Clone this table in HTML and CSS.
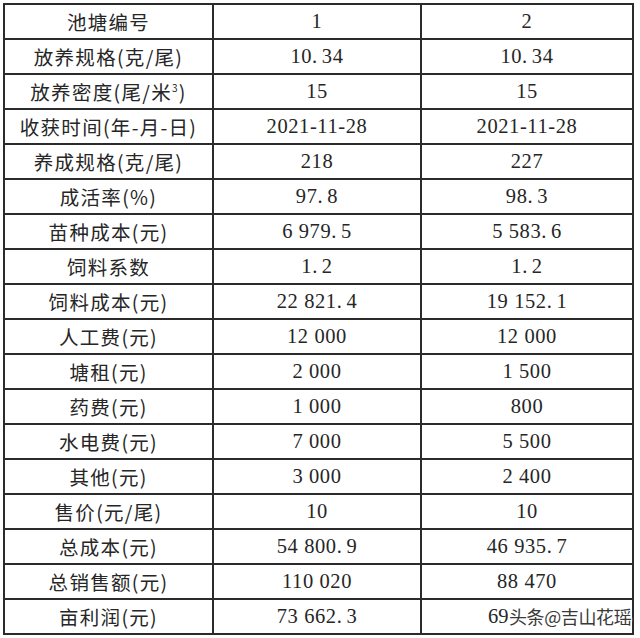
FILE: index.html
```html
<!DOCTYPE html>
<html lang="zh-CN">
<head>
<meta charset="utf-8">
<title>养殖成本表</title>
<link rel="stylesheet" href="styles.css">
</head>
<body>
<div class="page">
<table class="sheet">
  <colgroup><col class="c1"><col class="c2"><col class="c3"></colgroup>
  <tbody>
    <tr><td class="lbl">池塘编号</td><td class="num">1</td><td class="num">2</td></tr>
    <tr><td class="lbl">放养规格(克/尾)</td><td class="num">10.<span class="d">34</span></td><td class="num">10.<span class="d">34</span></td></tr>
    <tr><td class="lbl">放养密度(尾/米<sup>3</sup>)</td><td class="num">15</td><td class="num">15</td></tr>
    <tr><td class="lbl">收获时间(年-月-日)</td><td class="num">2021-11-28</td><td class="num">2021-11-28</td></tr>
    <tr><td class="lbl">养成规格(克/尾)</td><td class="num">218</td><td class="num">227</td></tr>
    <tr><td class="lbl">成活率(%)</td><td class="num">97.<span class="d">8</span></td><td class="num">98.<span class="d">3</span></td></tr>
    <tr><td class="lbl">苗种成本(元)</td><td class="num">6 979.<span class="d">5</span></td><td class="num">5 583.<span class="d">6</span></td></tr>
    <tr><td class="lbl">饲料系数</td><td class="num">1.<span class="d">2</span></td><td class="num">1.<span class="d">2</span></td></tr>
    <tr><td class="lbl">饲料成本(元)</td><td class="num">22 821.<span class="d">4</span></td><td class="num">19 152.<span class="d">1</span></td></tr>
    <tr><td class="lbl">人工费(元)</td><td class="num">12 000</td><td class="num">12 000</td></tr>
    <tr><td class="lbl">塘租(元)</td><td class="num">2 000</td><td class="num">1 500</td></tr>
    <tr><td class="lbl">药费(元)</td><td class="num">1 000</td><td class="num">800</td></tr>
    <tr><td class="lbl">水电费(元)</td><td class="num">7 000</td><td class="num">5 500</td></tr>
    <tr><td class="lbl">其他(元)</td><td class="num">3 000</td><td class="num">2 400</td></tr>
    <tr><td class="lbl">售价(元/尾)</td><td class="num">10</td><td class="num">10</td></tr>
    <tr><td class="lbl">总成本(元)</td><td class="num">54 800.<span class="d">9</span></td><td class="num">46 935.<span class="d">7</span></td></tr>
    <tr><td class="lbl">总销售额(元)</td><td class="num">110 020</td><td class="num">88 470</td></tr>
    <tr><td class="lbl">亩利润(元)</td><td class="num">73 662.<span class="d">3</span></td><td class="num last"><span class="v">69</span></td></tr>
  </tbody>
</table>
<div class="mark">头条@吉山花瑶</div>
</div>
</body>
</html>
```

FILE: styles.css
```css
html, body {
  margin: 0;
  padding: 0;
  background: #ffffff;
}

.page {
  position: relative;
  width: 640px;
  height: 638px;
  padding: 3px 0 0 3px;
  box-sizing: border-box;
}

.sheet {
  border-collapse: collapse;
  table-layout: fixed;
  width: 631px;
  border: 2px solid #2b2b2b;
}

.c1 { width: 209px; }
.c2 { width: 208px; }
.c3 { width: 212px; }

.sheet td {
  border: 2px solid #2b2b2b;
  height: 33px;
  padding: 0;
  text-align: center;
  vertical-align: middle;
  color: #262626;
  white-space: nowrap;
  overflow: hidden;
}

.lbl {
  font-family: "Noto Sans CJK SC", "Noto Sans", sans-serif;
  font-size: 19.5px;
  letter-spacing: 1.3px;
  line-height: 33px;
}

.lbl sup {
  font-size: 10px;
  vertical-align: 8px;
  line-height: 0;
}

.num {
  font-family: "Liberation Serif", serif;
  font-size: 20.5px;
  line-height: 33px;
  letter-spacing: 0.6px;
}

.num .d {
  margin-left: 4px;
}

.last {
  text-align: left !important;
  padding-left: 66px !important;
}

.last .v {
  letter-spacing: 0;
}

.mark {
  position: absolute;
  left: 509px;
  top: 603px;
  font-family: "Noto Sans CJK SC", sans-serif;
  font-size: 18px;
  letter-spacing: -0.4px;
  color: #3a3a3a;
  text-shadow: 0 0 2px #fff, 0 0 2px #fff, 1px 1px 0 #fff, -1px -1px 0 #fff, 1px -1px 0 #fff, -1px 1px 0 #fff;
}
```
